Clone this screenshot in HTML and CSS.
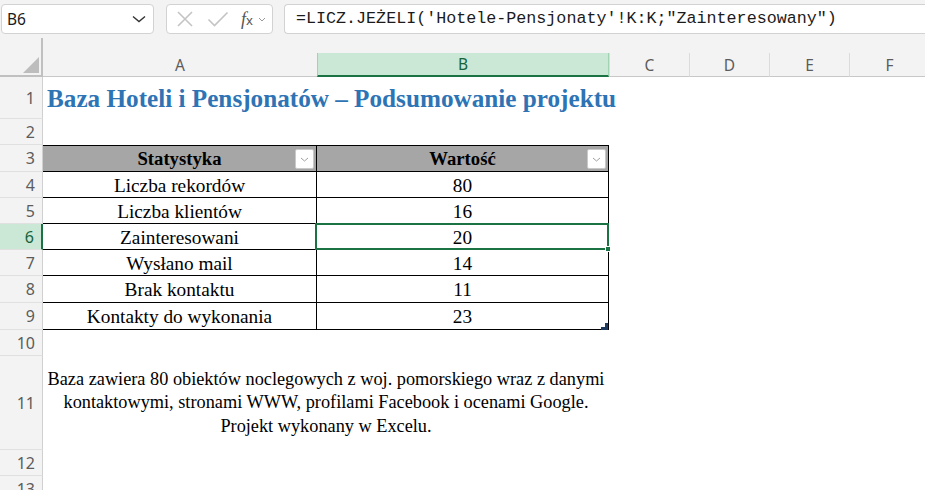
FILE: index.html
```html
<!DOCTYPE html>
<html lang="pl">
<head>
<meta charset="utf-8">
<link rel="stylesheet" href="styles.css">
</head>
<body>
<div class="app">
  <div class="fbar">
    <div class="namebox">
      <span class="ref">B6</span>
      <svg class="chev" width="14" height="8" viewBox="0 0 14 8"><path d="M1 1.5 L7 6.5 L13 1.5" fill="none" stroke="#333" stroke-width="1.4"/></svg>
    </div>
    <div class="fxbox">
      <svg class="ic" width="18" height="18" viewBox="0 0 18 18"><path d="M2 2 L16 16 M16 2 L2 16" stroke="#c4c4c4" stroke-width="1.6" fill="none"/></svg>
      <svg class="ic" width="22" height="18" viewBox="0 0 22 18"><path d="M1.5 9.5 L7.5 15.5 L20.5 2.5" stroke="#c4c4c4" stroke-width="1.6" fill="none"/></svg>
      <span class="fx"><i>f</i><sub>x</sub></span>
      <svg class="minichev" width="8" height="5" viewBox="0 0 8 5"><path d="M1 1 L4 4 L7 1" fill="none" stroke="#999" stroke-width="1"/></svg>
    </div>
    <div class="formula">=LICZ.JEŻELI('Hotele-Pensjonaty'!K:K;"Zainteresowany")</div>
  </div>

  <div class="sheet">
    <div class="row hdr">
      <div class="corner"><span class="tri"></span></div>
      <div class="colh a">A</div>
      <div class="colh b sel">B</div>
      <div class="colh n">C</div>
      <div class="colh n">D</div>
      <div class="colh n">E</div>
      <div class="colh n">F</div>
    </div>

    <div class="row r1">
      <div class="rh">1</div>
      <div class="cell a title">Baza Hoteli i Pensjonatów – Podsumowanie projektu</div>
    </div>
    <div class="row">
      <div class="rh">2</div>
    </div>
    <div class="row r3">
      <div class="rh">3</div>
      <div class="cell a th">Statystyka<span class="filt"><svg width="9" height="5" viewBox="0 0 9 5"><path d="M1 1 L4.5 4 L8 1" fill="none" stroke="#a0a0a0" stroke-width="1"/></svg></span></div>
      <div class="cell b th">Wartość<span class="filt"><svg width="9" height="5" viewBox="0 0 9 5"><path d="M1 1 L4.5 4 L8 1" fill="none" stroke="#a0a0a0" stroke-width="1"/></svg></span></div>
    </div>
    <div class="row">
      <div class="rh">4</div>
      <div class="cell a td">Liczba rekordów</div>
      <div class="cell b td">80</div>
    </div>
    <div class="row">
      <div class="rh">5</div>
      <div class="cell a td">Liczba klientów</div>
      <div class="cell b td">16</div>
    </div>
    <div class="row">
      <div class="rh selr">6</div>
      <div class="cell a td">Zainteresowani</div>
      <div class="cell b td active">20<span class="handle"></span></div>
    </div>
    <div class="row">
      <div class="rh">7</div>
      <div class="cell a td">Wysłano mail</div>
      <div class="cell b td">14</div>
    </div>
    <div class="row h27">
      <div class="rh">8</div>
      <div class="cell a td">Brak kontaktu</div>
      <div class="cell b td">11</div>
    </div>
    <div class="row h27">
      <div class="rh">9</div>
      <div class="cell a td">Kontakty do wykonania</div>
      <div class="cell b td last">23<svg class="resize" width="7" height="7" viewBox="0 0 7 7"><path d="M0 7 L0 4 L4 4 L4 0 L7 0 L7 7 Z" fill="#1f3a5f"/></svg></div>
    </div>
    <div class="row">
      <div class="rh">10</div>
    </div>
    <div class="row r11">
      <div class="rh">11</div>
      <div class="cell ab note">Baza zawiera 80 obiektów noclegowych z woj. pomorskiego wraz z danymi<br>kontaktowymi, stronami WWW, profilami Facebook i ocenami Google.<br>Projekt wykonany w Excelu.</div>
    </div>
    <div class="row">
      <div class="rh">12</div>
    </div>
    <div class="row">
      <div class="rh">13</div>
    </div>
  </div>
</div>
</body>
</html>
```

FILE: styles.css
```css
* { box-sizing: border-box; }
html, body {
  margin: 0;
  padding: 0;
  width: 925px;
  height: 490px;
  overflow: hidden;
  background: #ffffff;
}
.app {
  width: 925px;
  height: 490px;
  overflow: hidden;
  font-family: "Noto Sans", "Open Sans", sans-serif;
}

/* formula bar */
.fbar {
  height: 38px;
  background: #f3f3f3;
  display: flex;
  align-items: flex-start;
  padding: 4px 0 0 1px;
  width: 1000px;
}
.namebox {
  width: 153px;
  height: 30px;
  background: #fff;
  border: 1px solid #d2d2d2;
  border-radius: 4px;
  display: flex;
  align-items: center;
  justify-content: space-between;
  padding: 0 7px 0 5px;
}
.ref {
  font-size: 15.5px;
  color: #1b1b1b;
}
.fxbox {
  margin-left: 12px;
  width: 107px;
  height: 30px;
  background: #fff;
  border: 1px solid #d2d2d2;
  border-radius: 4px;
  display: flex;
  align-items: center;
  padding: 0 0 0 9px;
}
.fxbox .ic + .ic { margin-left: 13px; }
.fx {
  margin-left: 12px;
  font-family: "Liberation Serif", serif;
  color: #555;
  font-size: 18px;
  line-height: 1;
  display: inline-flex;
  align-items: baseline;
}
.fx i { font-style: italic; }
.fx sub { font-size: 13px; font-style: normal; vertical-align: -3px; margin-left: 0; font-family: "Noto Sans", sans-serif; }
.minichev { margin-left: 5px; }
.formula {
  margin-left: 11px;
  flex: 1;
  height: 30px;
  background: #fff;
  border: 1px solid #d2d2d2;
  border-right: none;
  border-radius: 4px 0 0 4px;
  font-family: "Liberation Mono", "DejaVu Sans Mono", monospace;
  font-size: 16.7px;
  color: #1b1b1b;
  line-height: 28px;
  padding-left: 11px;
  white-space: nowrap;
}

/* sheet */
.sheet { width: 1000px; }
.row {
  display: flex;
  height: 26px;
}
.row.hdr {
  height: 39px;
  background: #f3f3f3;
  align-items: flex-end;
}
.corner {
  width: 43px;
  height: 39px;
  position: relative;
  border-right: 2px solid #c0c0c0;
  border-bottom: 2px solid #c0c0c0;
  margin-bottom: 1px;
  align-self: flex-start;
}
.tri {
  position: absolute;
  right: 2px;
  bottom: 2px;
  width: 0;
  height: 0;
  border-left: 16px solid transparent;
  border-bottom: 16px solid #bdbdbd;
}
.colh {
  height: 24px;
  font-size: 15.5px;
  color: #5c5c5c;
  display: flex;
  align-items: center;
  justify-content: center;
  border-bottom: 1px solid #c8c8c8;
  border-left: 1px solid #dcdcdc;
}
.colh.a { width: 274px; border-left: none; }
.colh.b { width: 292px; }
.colh.n { width: 80px; }
.colh.sel {
  background: #cae8d5;
  color: #17633a;
  border-bottom: 2px solid #1b7343;
  border-left: 1px solid #9fd3b2;
  border-right: 1px solid #9fd3b2;
}

.rh {
  width: 43px;
  flex: none;
  background: #f3f3f3;
  border-right: 1px solid #d0d0d0;
  border-bottom: 1px solid #e0e0e0;
  color: #5c5c5c;
  font-size: 16px;
  text-align: right;
  padding-right: 7px;
  display: flex;
  align-items: center;
  justify-content: flex-end;
}
.rh.selr {
  background: #cae8d5;
  color: #17633a;
  border-right: 2px solid #1b7343;
}

.cell {
  font-family: "Liberation Serif", "Times New Roman", serif;
  color: #000;
  display: flex;
  align-items: center;
  justify-content: center;
  position: relative;
  flex: none;
}
.cell.a { width: 274px; }
.cell.b { width: 292px; }
.cell.ab { width: 566px; }

.r1 { height: 42px; }
.title {
  justify-content: flex-start;
  align-items: flex-end;
  padding: 0 0 6px 4px;
  white-space: nowrap;
  font-weight: bold;
  font-size: 25.2px;
  color: #2e74b5;
  overflow: visible;
}
.r3 { height: 27px; }
.h27 { height: 27px; }
.th {
  background: #a6a6a6;
  font-weight: bold;
  font-size: 18.7px;
  border-top: 1px solid #000;
  border-bottom: 1px solid #000;
  border-right: 1px solid #000;
}
.filt {
  position: absolute;
  right: 2px;
  top: 3px;
  width: 19px;
  height: 20px;
  background: #fff;
  border: 1px solid #c9c9c9;
  border-radius: 2px;
  display: flex;
  align-items: center;
  justify-content: center;
}
.td {
  font-size: 19.3px;
  border-bottom: 1px solid #000;
  border-right: 1px solid #000;
  padding-top: 2px;
}
.active::after {
  content: "";
  position: absolute;
  left: -2px;
  top: -1px;
  right: -1px;
  bottom: -1px;
  border: 2px solid #1b7343;
}
.handle {
  position: absolute;
  right: -3px;
  bottom: -3px;
  width: 6px;
  height: 6px;
  background: #1b7343;
  border: 1px solid #fff;
  z-index: 2;
}
.resize {
  position: absolute;
  right: 0;
  bottom: -1px;
}
.r11 { height: 94px; }
.note {
  font-size: 18.3px;
  line-height: 23.5px;
  text-align: center;
}
```
